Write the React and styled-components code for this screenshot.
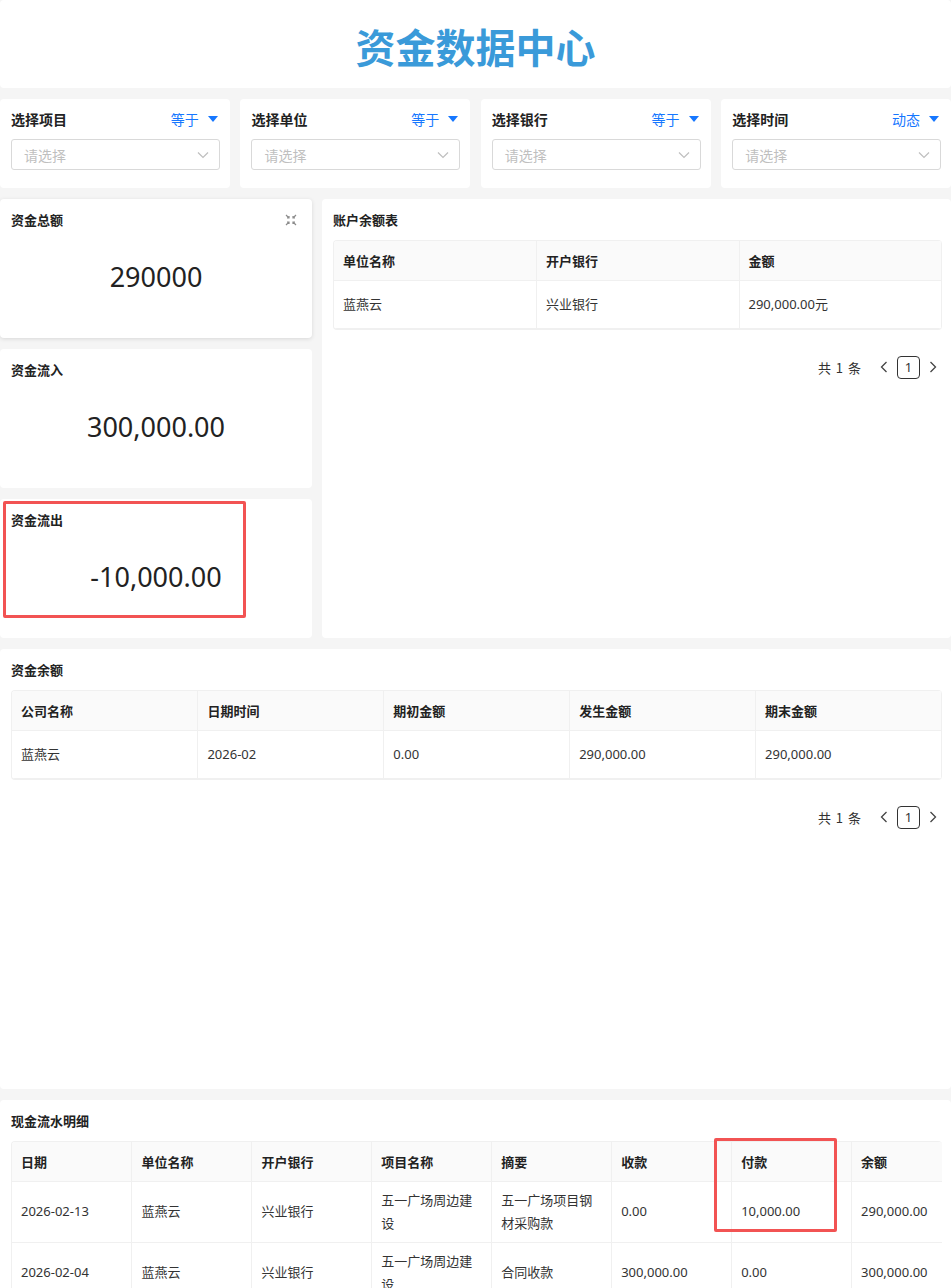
import React from "react";
import styled, { createGlobalStyle } from "styled-components";

const GlobalStyle = createGlobalStyle`
  * { box-sizing: border-box; }
  body {
    margin: 0;
    background: #f5f5f5;
    font-family: "Noto Sans", "Noto Sans CJK SC", sans-serif;
    color: #333;
  }
`;

const filters = [
  { label: "选择项目", op: "等于" },
  { label: "选择单位", op: "等于" },
  { label: "选择银行", op: "等于" },
  { label: "选择时间", op: "动态" },
];

const stats = [
  { title: "资金总额", value: "290000", expand: true },
  { title: "资金流入", value: "300,000.00" },
  { title: "资金流出", value: "-10,000.00", marked: true },
];

const flowRows = [
  ["2026-02-13", "蓝燕云", "兴业银行", "五一广场周边建设", "五一广场项目钢材采购款", "0.00", "10,000.00", "290,000.00"],
  ["2026-02-04", "蓝燕云", "兴业银行", "五一广场周边建设", "合同收款", "300,000.00", "0.00", "300,000.00"],
];

function ExpandIcon() {
  return (
    <svg width="12" height="12" viewBox="0 0 12 12" fill="none" stroke="#8c8c8c" strokeWidth="1.2">
      <path d="M1 1l3 3M4 2v2H2" />
      <path d="M11 1l-3 3M8 2v2h2" />
      <path d="M1 11l3-3M2 8h2v2" />
      <path d="M11 11l-3-3M10 8H8v2" />
    </svg>
  );
}

function Chevron() {
  return (
    <svg width="12" height="8" viewBox="0 0 12 8" fill="none" stroke="#bfbfbf" strokeWidth="1.2">
      <path d="M1 1.5l5 5 5-5" />
    </svg>
  );
}

function Arrow({ dir }) {
  return (
    <svg width="8" height="12" viewBox="0 0 8 12" fill="none" stroke="#444" strokeWidth="1.3">
      <path d={dir === "left" ? "M6.5 1L1.5 6l5 5" : "M1.5 1l5 5-5 5"} />
    </svg>
  );
}

function Pager() {
  return (
    <Pagination>
      <Total>共 1 条</Total>
      <PageArrow>
        <Arrow dir="left" />
      </PageArrow>
      <PageBox>1</PageBox>
      <PageArrow>
        <Arrow dir="right" />
      </PageArrow>
    </Pagination>
  );
}

export default function App() {
  return (
    <>
      <GlobalStyle />
      <Page>
        <HeaderCard>
          <Title>资金数据中心</Title>
        </HeaderCard>

        <FilterRow>
          {filters.map((f) => (
            <FilterCard key={f.label}>
              <FilterHead>
                <Label>{f.label}</Label>
                <Operator>
                  {f.op}
                  <Triangle />
                </Operator>
              </FilterHead>
              <SelectBox>
                <span>请选择</span>
                <Chevron />
              </SelectBox>
            </FilterCard>
          ))}
        </FilterRow>

        <MiddleGrid>
          <StatColumn>
            {stats.map((s) => (
              <StatCard key={s.title} $shadow={s.expand}>
                <CardHead>
                  <CardTitle>{s.title}</CardTitle>
                  {s.expand && <ExpandIcon />}
                </CardHead>
                <StatValue>{s.value}</StatValue>
                {s.marked && <Marker $left={3} $top={2} $w={243} $h={117} />}
              </StatCard>
            ))}
          </StatColumn>

          <Card>
            <CardTitle>账户余额表</CardTitle>
            <TableWrap>
              <Table>
                <thead>
                  <tr>
                    <Th>单位名称</Th>
                    <Th>开户银行</Th>
                    <Th>金额</Th>
                  </tr>
                </thead>
                <tbody>
                  <tr>
                    <Td>蓝燕云</Td>
                    <Td>兴业银行</Td>
                    <Td>290,000.00元</Td>
                  </tr>
                </tbody>
              </Table>
            </TableWrap>
            <Pager />
          </Card>
        </MiddleGrid>

        <Card $minHeight={440}>
          <CardTitle>资金余额</CardTitle>
          <TableWrap>
            <Table>
              <thead>
                <tr>
                  <Th>公司名称</Th>
                  <Th>日期时间</Th>
                  <Th>期初金额</Th>
                  <Th>发生金额</Th>
                  <Th>期末金额</Th>
                </tr>
              </thead>
              <tbody>
                <tr>
                  <Td>蓝燕云</Td>
                  <Td>2026-02</Td>
                  <Td>0.00</Td>
                  <Td>290,000.00</Td>
                  <Td>290,000.00</Td>
                </tr>
              </tbody>
            </Table>
          </TableWrap>
          <Pager />
        </Card>

        <Card>
          <CardTitle>现金流水明细</CardTitle>
          <TableWrap>
            <Table $width={960}>
              <thead>
                <tr>
                  {["日期", "单位名称", "开户银行", "项目名称", "摘要", "收款", "付款", "余额"].map((h) => (
                    <Th key={h}>{h}</Th>
                  ))}
                </tr>
              </thead>
              <tbody>
                {flowRows.map((r) => (
                  <tr key={r[0]}>
                    {r.map((c, i) => (
                      <Td key={i}>{c}</Td>
                    ))}
                  </tr>
                ))}
              </tbody>
            </Table>
          </TableWrap>
          <Marker $left={714} $top={38} $w={123} $h={94} />
        </Card>
      </Page>
    </>
  );
}

const Page = styled.div`
  display: flex;
  flex-direction: column;
  gap: 11px;
  padding-bottom: 40px;
`;

const Card = styled.div`
  position: relative;
  background: #fff;
  border-radius: 4px;
  padding: 11px 9px 11px 11px;
  min-height: ${(p) => (p.$minHeight ? `${p.$minHeight}px` : "auto")};
`;

const HeaderCard = styled(Card)`
  height: 88px;
  display: flex;
  align-items: center;
  justify-content: center;
  padding: 14px 0 11px;
`;

const Title = styled.h1`
  margin: 0;
  font-family: "Noto Sans CJK SC", sans-serif;
  font-size: 40px;
  font-weight: 700;
  color: #3a9ad9;
`;

const FilterRow = styled.div`
  display: grid;
  grid-template-columns: repeat(4, 1fr);
  gap: 10.6px;
`;

const FilterCard = styled(Card)`
  height: 89px;
  padding: 10px 10px 18px 11px;
`;

const FilterHead = styled.div`
  display: flex;
  justify-content: space-between;
  align-items: center;
  height: 20px;
  margin-bottom: 10px;
`;

const Label = styled.span`
  font-family: "Noto Sans CJK SC", sans-serif;
  font-size: 14px;
  font-weight: 700;
  color: #222;
`;

const Operator = styled.span`
  display: flex;
  align-items: center;
  gap: 9px;
  font-family: "Noto Sans CJK SC", sans-serif;
  font-size: 14px;
  color: #1677ff;
`;

const Triangle = styled.span`
  width: 0;
  height: 0;
  border-left: 5px solid transparent;
  border-right: 5px solid transparent;
  border-top: 6px solid #1677ff;
  margin-right: 2px;
`;

const SelectBox = styled.div`
  height: 31px;
  border: 1px solid #d9d9d9;
  border-radius: 3px;
  display: flex;
  align-items: center;
  justify-content: space-between;
  padding: 0 10px 0 12px;
  font-family: "Noto Sans CJK SC", sans-serif;
  font-size: 14px;
  color: #bfbfbf;
`;

const MiddleGrid = styled.div`
  display: grid;
  grid-template-columns: 312px 1fr;
  gap: 10px;
`;

const StatColumn = styled.div`
  display: flex;
  flex-direction: column;
  gap: 11px;
`;

const StatCard = styled(Card)`
  height: 139px;
  padding-right: 11px;
  box-shadow: ${(p) => (p.$shadow ? "0 1px 4px rgba(0,0,0,0.12)" : "none")};
`;

const CardHead = styled.div`
  display: flex;
  justify-content: space-between;
  align-items: flex-start;
  padding-right: 4px;
  padding-top: 0;

  > svg {
    margin-top: 4px;
  }
`;

const CardTitle = styled.div`
  font-family: "Noto Sans CJK SC", sans-serif;
  font-size: 13px;
  font-weight: 700;
  line-height: 20px;
  color: #222;
  margin-bottom: 10px;
`;

const StatValue = styled.div`
  text-align: center;
  font-size: 27px;
  line-height: 36px;
  color: #222;
  margin-top: 19px;
`;

const Marker = styled.div`
  position: absolute;
  left: ${(p) => p.$left}px;
  top: ${(p) => p.$top}px;
  width: ${(p) => p.$w}px;
  height: ${(p) => p.$h}px;
  border: 3px solid #f25353;
  border-radius: 2px;
  pointer-events: none;
`;

const TableWrap = styled.div`
  overflow: hidden;
  border: 1px solid #f0f0f0;
  border-right: none;
  border-radius: 4px;
`;

const Table = styled.table`
  width: ${(p) => (p.$width ? `${p.$width}px` : "100%")};
  border-collapse: collapse;
  table-layout: fixed;
  font-size: 13px;
`;

const Th = styled.th`
  background: #fafafa;
  text-align: left;
  font-family: "Noto Sans CJK SC", sans-serif;
  font-weight: 700;
  color: #222;
  height: 39px;
  padding: 0 9px;
  border-right: 1px solid #f0f0f0;
  border-bottom: 1px solid #f0f0f0;
`;

const Td = styled.td`
  height: 48px;
  padding: 7px 9px;
  line-height: 23px;
  color: #333;
  border-right: 1px solid #f0f0f0;
  border-bottom: 1px solid #f0f0f0;
  vertical-align: middle;
`;

const Pagination = styled.div`
  display: flex;
  justify-content: flex-end;
  align-items: center;
  margin-top: 26px;
  font-family: "Noto Sans CJK SC", sans-serif;
  font-size: 13px;
  color: #333;
`;

const Total = styled.span`
  margin-right: 14px;
  word-spacing: 2px;
`;

const PageArrow = styled.span`
  display: flex;
  align-items: center;
  padding: 0 5px;
`;

const PageBox = styled.span`
  width: 23px;
  height: 23px;
  border: 1px solid #333;
  border-radius: 4px;
  display: flex;
  align-items: center;
  justify-content: center;
  margin: 0 4px;
  font-family: "Noto Sans", sans-serif;
  font-size: 13px;
`;
